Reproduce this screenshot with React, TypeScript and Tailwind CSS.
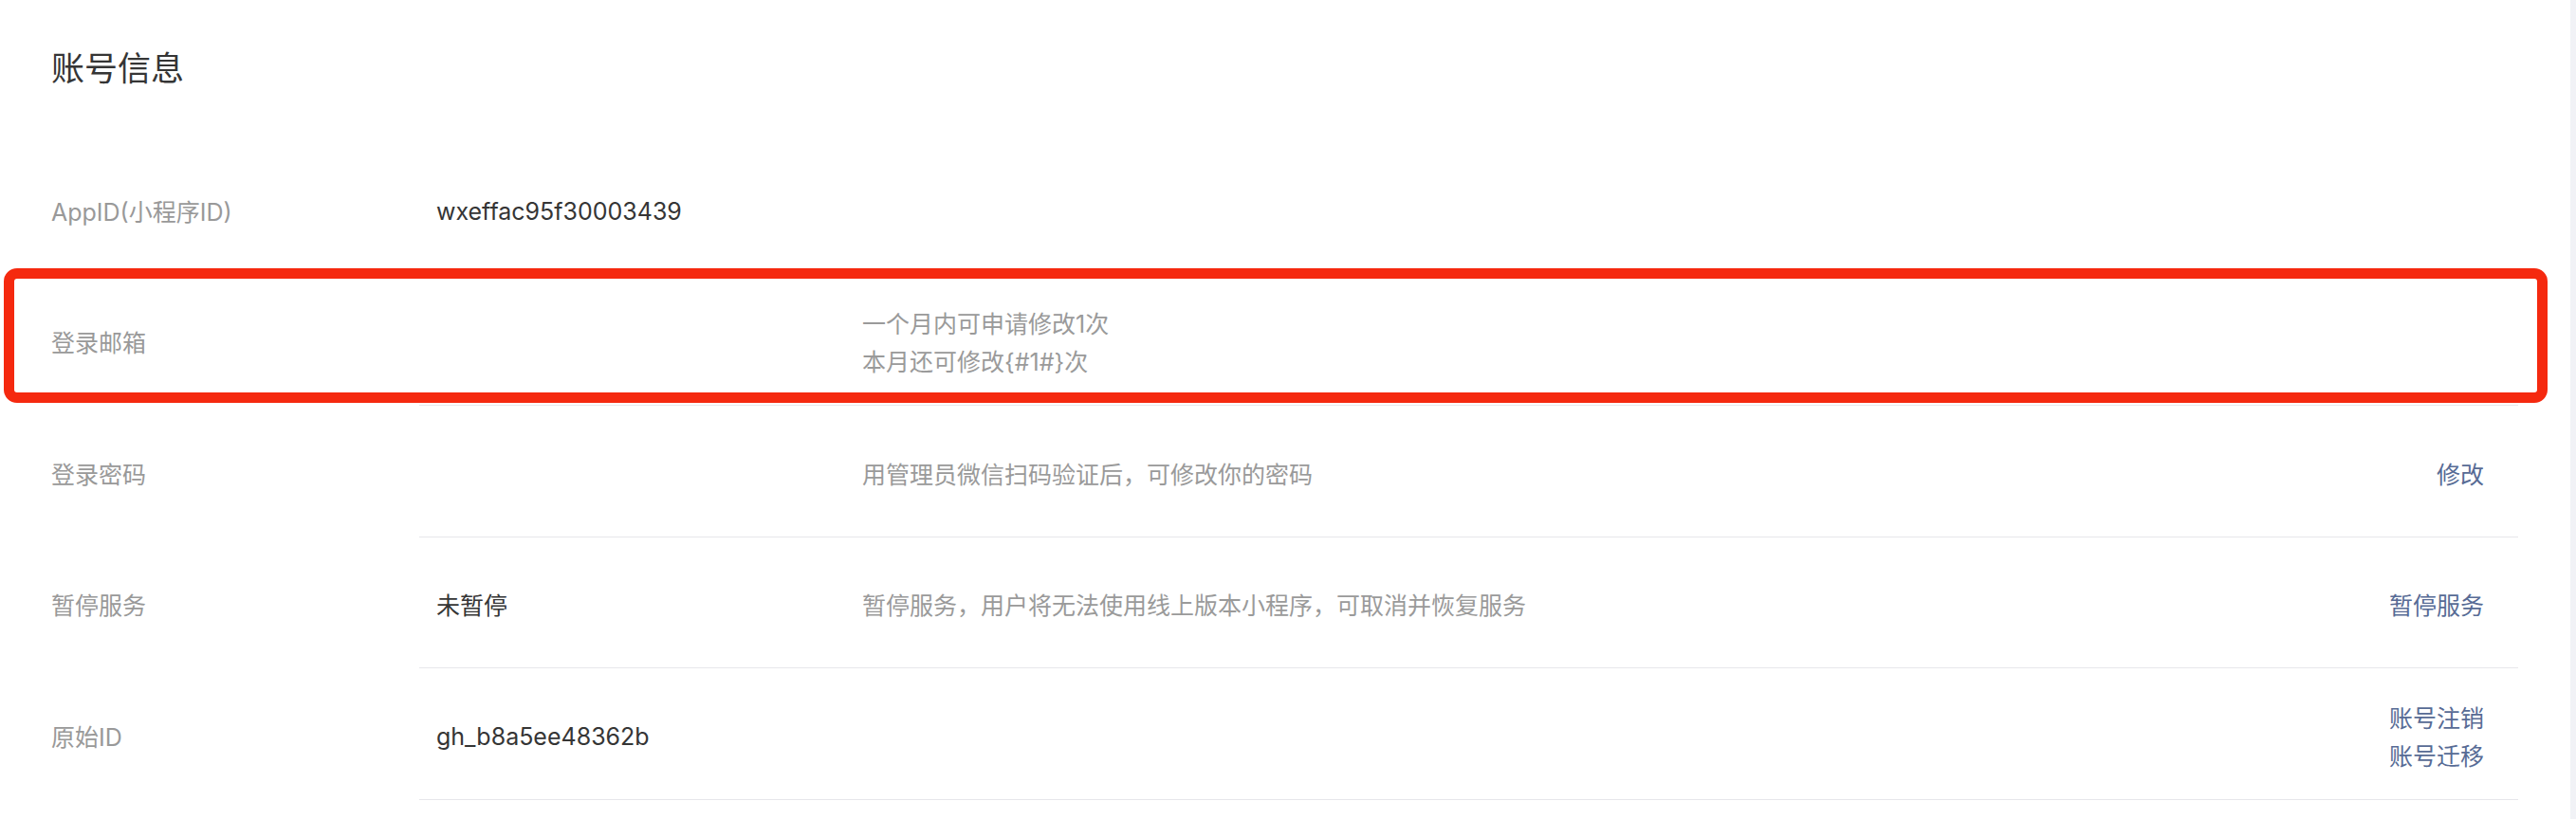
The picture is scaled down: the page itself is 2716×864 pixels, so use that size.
import React from "react";

type Row = {
  label: string;
  value?: string;
  desc?: string[];
  actions?: string[];
};

const rows: Row[] = [
  { label: "AppID(小程序ID)", value: "wxeffac95f30003439" },
  { label: "登录邮箱", desc: ["一个月内可申请修改1次", "本月还可修改{#1#}次"] },
  { label: "登录密码", desc: ["用管理员微信扫码验证后，可修改你的密码"], actions: ["修改"] },
  {
    label: "暂停服务",
    value: "未暂停",
    desc: ["暂停服务，用户将无法使用线上版本小程序，可取消并恢复服务"],
    actions: ["暂停服务"],
  },
  { label: "原始ID", value: "gh_b8a5ee48362b", actions: ["账号注销", "账号迁移"] },
];

export default function App() {
  return (
    <div
      className="flex w-[2716px] h-[864px] bg-white overflow-hidden"
      style={{ fontFamily: 'Inter, "Noto Sans CJK SC", sans-serif' }}
    >
      <div className="relative w-[2710px] h-full bg-white">
        <div className="h-[151px] pl-[54px] pt-[47px]">
          <h1 className="text-[35px] leading-[50px] text-[#353535] font-normal">账号信息</h1>
        </div>
        {rows.map((r, i) => (
          <div key={i} className="flex h-[138.5px]">
            <div className="w-[442px] pl-[54px] pt-[8px] flex items-center text-[25px] text-[#999999]">
              {r.label}
            </div>
            <div
              className={
                "flex-1 mr-[55px] pt-[8px] flex items-center border-b " +
                (i === 0 ? "border-transparent" : "border-[#e7e7eb]")
              }
            >
              <div className="w-[467px] pl-[18px] text-[25px] text-[#353535]">{r.value}</div>
              <div className="flex-1 text-[25px] leading-[40px] text-[#9a9a9a]">
                {r.desc?.map((d, j) => (
                  <div key={j}>{d}</div>
                ))}
              </div>
              <div className="pr-[36px] flex flex-col items-end text-[25px] leading-[40px] text-[#576b95]">
                {r.actions?.map((a, j) => (
                  <span key={j}>{a}</span>
                ))}
              </div>
            </div>
          </div>
        ))}
        <div className="absolute left-[4px] top-[283px] w-[2682px] h-[142px] border-[11px] border-[#f5290f] rounded-[14px]" />
      </div>
      <div className="flex-1 h-full bg-[#f1f2f6]" />
    </div>
  );
}
